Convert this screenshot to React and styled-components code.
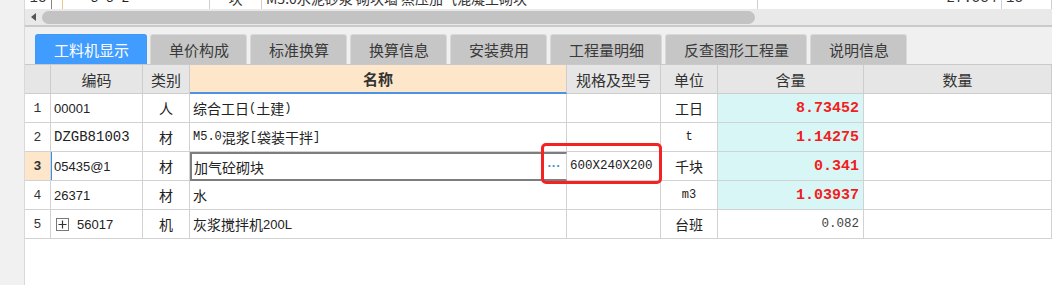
import React from "react";
import styled, { createGlobalStyle } from "styled-components";

const GlobalStyle = createGlobalStyle`
  html, body { margin: 0; padding: 0; background: #ffffff; }
  body { font-family: "Noto Sans CJK SC", "Noto Sans", sans-serif; color: #222; }
  * { box-sizing: border-box; }
`;

const CJK = `"Noto Sans CJK SC", "Noto Sans", sans-serif`;
const MONO = `"Liberation Mono", "DejaVu Sans Mono", "Noto Sans CJK SC", monospace`;
const SANS = `"Liberation Sans", "Noto Sans CJK SC", sans-serif`;

const Page = styled.div`
  display: flex;
  width: 1052px;
  height: 285px;
  overflow: hidden;
`;

const LeftStrip = styled.div`
  width: 25px;
  flex: none;
  background: #f1f1f1;
  border-right: 1px solid #d9d9d9;
`;

const Main = styled.div`
  position: relative;
  flex: 1;
  display: flex;
  flex-direction: column;
  background: #fff;
  min-width: 0;
`;

/* clipped previous table row */
const TopFragment = styled.div`
  height: 9px;
  overflow: hidden;
  background: #fff;
`;

const FragRow = styled.div`
  display: flex;
  height: 22px;
  margin-top: -13px;
`;

const FragCell = styled.div`
  width: ${(p) => p.$w}px;
  flex: ${(p) => (p.$grow ? 1 : "none")};
  border-right: 1px solid ${(p) => p.$line || "#cfcfcf"};
  display: flex;
  align-items: center;
  justify-content: ${(p) => p.$align || "flex-start"};
  padding: 0 4px;
  font-family: ${(p) => (p.$mono ? MONO : CJK)};
  font-size: 14px;
  color: #333;
  white-space: nowrap;
  overflow: hidden;
`;

const ScrollTrack = styled.div`
  height: 18px;
  background: #e9e9e9;
  border-bottom: 2px solid #cacaca;
  display: flex;
  align-items: center;
  padding-left: 6px;
  gap: 6px;
`;

const ArrowLeft = styled.div`
  width: 0;
  height: 0;
  border-top: 4px solid transparent;
  border-bottom: 4px solid transparent;
  border-right: 5px solid #555;
`;

const Thumb = styled.div`
  width: 713px;
  height: 13px;
  border-radius: 7px;
  background: #c3c3c3;
`;

const TabBar = styled.div`
  display: flex;
  align-items: flex-end;
  gap: 3px;
  height: 38px;
  padding-left: 10px;
  background: #f0f0f0;
  border-bottom: 1px solid #c9c9c9;
`;

const Tab = styled.div`
  height: 30px;
  padding: 0 17px 0 18px;
  display: flex;
  align-items: center;
  font-family: ${CJK};
  font-size: 15px;
  border-radius: 3px 3px 0 0;
  border: 1px solid ${(p) => (p.$active ? "#3f99f7" : "#d9d9d9")};
  border-bottom: none;
  background: ${(p) => (p.$active ? "#409cff" : "#c6c6c6")};
  color: ${(p) => (p.$active ? "#ffffff" : "#3a3a3a")};
  white-space: nowrap;
`;

const Grid = styled.div`
  display: grid;
  grid-template-columns: 26px 92px 47px 377px 94px 57px 146px 1fr;
  grid-auto-rows: 29px;
`;

const HeadCell = styled.div`
  background: ${(p) => (p.$hl ? "#fde6c9" : "#e6e6e6")};
  border-right: 1px solid #cdcdcd;
  border-bottom: ${(p) => (p.$hl ? "2px solid #4a93e6" : "1px solid #cdcdcd")};
  display: flex;
  align-items: center;
  justify-content: center;
  font-family: ${CJK};
  font-size: 15px;
  font-weight: ${(p) => (p.$hl ? 700 : 400)};
  color: #333;
  white-space: nowrap;
`;

const Cell = styled.div`
  position: relative;
  background: ${(p) => p.$bg || "#fff"};
  border-right: 1px solid #d2d2d2;
  border-bottom: 1px solid #d2d2d2;
  display: flex;
  align-items: center;
  justify-content: ${(p) =>
    p.$align === "right" ? "flex-end" : p.$align === "center" ? "center" : "flex-start"};
  padding: ${(p) => (p.$align === "right" ? "0 4px 0 0" : p.$align === "center" ? "0" : "0 0 0 3px")};
  font-family: ${CJK};
  font-size: 14px;
  color: #222;
  white-space: nowrap;
  overflow: hidden;
  ${(p) => (p.$focus ? "box-shadow: inset 1px 0 0 #3d8ee8;" : "")}
`;

const RowNum = styled(Cell)`
  justify-content: center;
  padding: 0;
  font-family: ${MONO};
  font-size: 13px;
  font-weight: ${(p) => (p.$current ? 700 : 400)};
  color: #333;
`;

const Mono = styled.span`
  font-family: ${MONO};
  font-size: ${(p) => p.$size || 12}px;
  color: ${(p) => p.$color || "#222"};
  font-weight: ${(p) => (p.$bold ? 700 : 400)};
`;

const Sans = styled.span`
  font-family: ${SANS};
  font-size: 13px;
  color: #222;
`;

const Editor = styled.div`
  background: #fff;
  border: 2px solid #7d7d7d;
  border-right: 1px solid #d2d2d2;
  display: flex;
  align-items: center;
  justify-content: space-between;
  padding-left: 2px;
  font-family: ${CJK};
  font-size: 14px;
  color: #222;
`;

const Dots = styled.span`
  width: 24px;
  text-align: center;
  color: #4a8fdc;
  font-family: ${SANS};
  font-size: 13px;
  font-weight: 700;
  line-height: 1;
  padding-bottom: 3px;
`;

const PlusBox = styled.span`
  width: 13px;
  height: 13px;
  border: 1px solid #777;
  display: inline-flex;
  align-items: center;
  justify-content: center;
  margin: 0 8px 0 2px;
  flex: none;
`;

const RedMark = styled.div`
  position: absolute;
  left: 516px;
  top: 143px;
  width: 121px;
  height: 41px;
  border: 3px solid #f42323;
  border-radius: 5px;
  pointer-events: none;
`;

const tabs = ["工料机显示", "单价构成", "标准换算", "换算信息", "安装费用", "工程量明细", "反查图形工程量", "说明信息"];

const CYAN = "#d9f6f6";
const PEACH = "#fde6c9";

function PlusIcon() {
  return (
    <svg width="9" height="9" viewBox="0 0 9 9">
      <path d="M4.5 0.5V8.5M0.5 4.5H8.5" stroke="#333" strokeWidth="1.2" />
    </svg>
  );
}

export default function App() {
  return (
    <>
      <GlobalStyle />
      <Page>
        <LeftStrip />
        <Main>
          <TopFragment>
            <FragRow>
              <FragCell $w={27} $align="center" $mono $line="#888">13</FragCell>
              <FragCell $w={11} $line="#f3c48a" />
              <FragCell $w={147}>
                <Mono $size={13}>&nbsp;&nbsp;&nbsp;3-5-2</Mono>
              </FragCell>
              <FragCell $w={52} $align="center">块</FragCell>
              <FragCell $w={496}>M5.0水泥砂浆 砌块墙 蒸压加气混凝土砌块</FragCell>
              <FragCell $w={244} $align="flex-end" $mono>27.534</FragCell>
              <FragCell $grow $mono>13</FragCell>
            </FragRow>
          </TopFragment>
          <ScrollTrack>
            <ArrowLeft />
            <Thumb />
          </ScrollTrack>
          <TabBar>
            {tabs.map((t, i) => (
              <Tab key={t} $active={i === 0}>{t}</Tab>
            ))}
          </TabBar>
          <Grid>
            <HeadCell />
            <HeadCell>编码</HeadCell>
            <HeadCell>类别</HeadCell>
            <HeadCell $hl>名称</HeadCell>
            <HeadCell>规格及型号</HeadCell>
            <HeadCell>单位</HeadCell>
            <HeadCell>含量</HeadCell>
            <HeadCell>数量</HeadCell>

            <RowNum>1</RowNum>
            <Cell><Sans>00001</Sans></Cell>
            <Cell $align="center">人</Cell>
            <Cell>综合工日<Mono $size={12}>(</Mono>土建<Mono $size={12}>)</Mono></Cell>
            <Cell />
            <Cell $align="center">工日</Cell>
            <Cell $align="right" $bg={CYAN}><Mono $size={15} $bold $color="#f21d1d">8.73452</Mono></Cell>
            <Cell />

            <RowNum>2</RowNum>
            <Cell><Mono $size={14}>DZGB81003</Mono></Cell>
            <Cell $align="center">材</Cell>
            <Cell><Mono $size={12}>M5.0</Mono>混浆<Mono $size={12}>[</Mono>袋装干拌<Mono $size={12}>]</Mono></Cell>
            <Cell />
            <Cell $align="center"><Mono $size={12}>t</Mono></Cell>
            <Cell $align="right" $bg={CYAN}><Mono $size={15} $bold $color="#f21d1d">1.14275</Mono></Cell>
            <Cell />

            <RowNum $bg={PEACH} $current>3</RowNum>
            <Cell $focus><Sans>05435@1</Sans></Cell>
            <Cell $align="center">材</Cell>
            <Editor>
              <span>加气砼砌块</span>
              <Dots>···</Dots>
            </Editor>
            <Cell><Mono $size={12.5}>600X240X200</Mono></Cell>
            <Cell $align="center">千块</Cell>
            <Cell $align="right" $bg={CYAN}><Mono $size={15} $bold $color="#f21d1d">0.341</Mono></Cell>
            <Cell />

            <RowNum>4</RowNum>
            <Cell><Sans>26371</Sans></Cell>
            <Cell $align="center">材</Cell>
            <Cell>水</Cell>
            <Cell />
            <Cell $align="center"><Mono $size={12}>m3</Mono></Cell>
            <Cell $align="right" $bg={CYAN}><Mono $size={15} $bold $color="#f21d1d">1.03937</Mono></Cell>
            <Cell />

            <RowNum>5</RowNum>
            <Cell>
              <PlusBox><PlusIcon /></PlusBox>
              <Sans>56017</Sans>
            </Cell>
            <Cell $align="center">机</Cell>
            <Cell>灰浆搅拌机<Sans>200L</Sans></Cell>
            <Cell />
            <Cell $align="center">台班</Cell>
            <Cell $align="right"><Mono $size={12.5} $color="#444">0.082</Mono></Cell>
            <Cell />
          </Grid>
          <RedMark />
        </Main>
      </Page>
    </>
  );
}
